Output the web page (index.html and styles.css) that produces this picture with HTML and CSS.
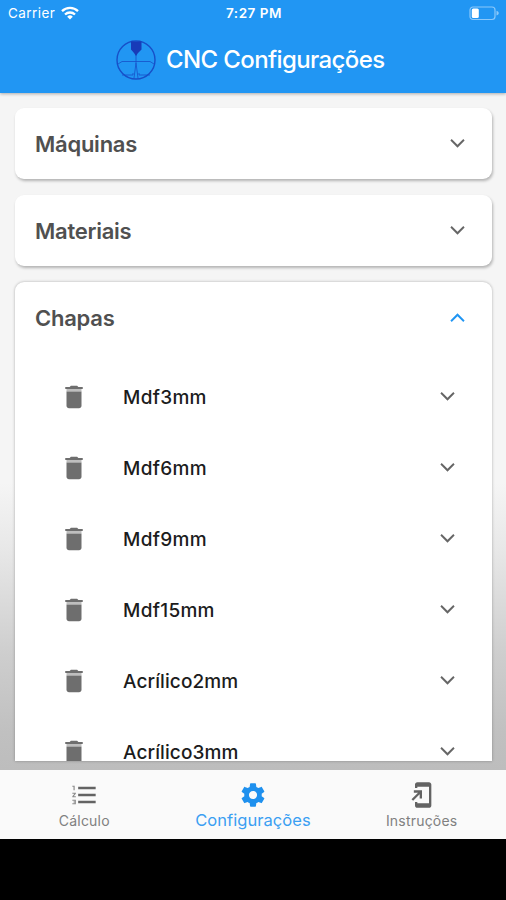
FILE: index.html
```html
<!DOCTYPE html>
<html lang="pt">
<head>
<meta charset="utf-8">
<title>CNC Configurações</title>
<link rel="stylesheet" href="styles.css">
</head>
<body>
<svg class="defs" width="0" height="0">
  <symbol id="chevron" viewBox="0 0 24 24"><path d="M16.800 8.300L12 13.100 7.200 8.300 6.100 9.500l5.900 6 5.900-6z"/></symbol>
  <symbol id="trash" viewBox="0 0 24 24"><path d="M6 19c0 1.100.9 2 2 2h8c1.100 0 2-.9 2-2V7.500H6z"/><path opacity=".45" d="M6 5.500h12v2H6z"/><path d="M19 4h-3.500l-1-1h-5l-1 1H5v1.600h14z"/></symbol>
</svg>
<header class="header">
  <div class="status">
    <div class="carrier"><span class="carrier-name">Carrier</span>
      <svg class="wifi" viewBox="0 0 18 14"><g fill="none" stroke="#fff" stroke-width="2.300"><path d="M1 5.200a11.500 11.500 0 0 1 16 0"/><path d="M4 8.500a7.300 7.300 0 0 1 10 0"/></g><path fill="#fff" d="M6.200 10.700a4 4 0 0 1 5.600 0L9 13.500z"/></svg>
    </div>
    <span class="time">7:27 PM</span>
    <svg class="battery" viewBox="0 0 31 15"><rect x="1" y="1" width="25" height="12.500" rx="3" fill="none" stroke="#8bc8fa" stroke-width="1.200"/><path d="M27.500 4.800c3 1.200 3 3.600 0 4.800z" fill="#8bc8fa"/><rect x="2.800" y="2.500" width="7" height="9.500" rx="1.500" fill="#fff"/></svg>
  </div>
  <div class="brand">
    <svg class="logo" viewBox="0 0 42 42"><g fill="none" stroke="#174fc8"><circle cx="21" cy="21" r="19" stroke-width="1.400"/><path d="M3 25l4-2.500h28l4 2.500M21 15v9l-2 15M21 24l2 15M7 36h11v-2M35 36H24v-2" stroke-width=".8"/></g><path fill="#183bb8" d="M16 2.500h10.500v8L23 14l-2 3-2-3-3-3.500z"/></svg>
    <h1 class="title">CNC Configurações</h1>
  </div>
</header>
<main class="content">
  <section class="card"><h2 class="card-head"><span>Máquinas</span><svg class="chev"><use href="#chevron"/></svg></h2></section>
  <section class="card"><h2 class="card-head"><span>Materiais</span><svg class="chev"><use href="#chevron"/></svg></h2></section>
  <section class="card open">
    <h2 class="card-head"><span>Chapas</span><svg class="chev up"><use href="#chevron"/></svg></h2>
    <ul class="list">
      <li class="row"><svg class="trash"><use href="#trash"/></svg><span class="name">Mdf3mm</span><svg class="chev"><use href="#chevron"/></svg></li>
      <li class="row"><svg class="trash"><use href="#trash"/></svg><span class="name">Mdf6mm</span><svg class="chev"><use href="#chevron"/></svg></li>
      <li class="row"><svg class="trash"><use href="#trash"/></svg><span class="name">Mdf9mm</span><svg class="chev"><use href="#chevron"/></svg></li>
      <li class="row"><svg class="trash"><use href="#trash"/></svg><span class="name">Mdf15mm</span><svg class="chev"><use href="#chevron"/></svg></li>
      <li class="row"><svg class="trash"><use href="#trash"/></svg><span class="name long">Acrílico2mm</span><svg class="chev"><use href="#chevron"/></svg></li>
      <li class="row"><svg class="trash"><use href="#trash"/></svg><span class="name long">Acrílico3mm</span><svg class="chev"><use href="#chevron"/></svg></li>
    </ul>
  </section>
</main>
<nav class="tabs">
  <a class="tab"><svg class="tab-icon" viewBox="0 0 24 24"><path opacity=".75" d="M2 17h2v.5H3v1h1v.5H2v1h3v-4H2v1zm1-9h1V4H2v1h1v3zm-1 3h1.800L2 13.100v.9h3v-1H3.200L5 10.900V10H2v1z"/><path d="M7 5v2h15V5zm0 14h15v-2H7zm0-6h15v-2H7z"/></svg><span>Cálculo</span></a>
  <a class="tab active"><svg class="tab-icon" viewBox="0 0 24 24"><path d="M19.430 12.980c.04-.32.07-.64.07-.98s-.03-.66-.07-.98l2.110-1.650c.19-.15.24-.42.12-.64l-2-3.460c-.12-.22-.39-.3-.61-.22l-2.490 1c-.52-.4-1.080-.73-1.690-.98l-.38-2.650C14.460 2.180 14.250 2 14 2h-4c-.25 0-.46.18-.49.42l-.38 2.650c-.61.25-1.170.59-1.690.98l-2.490-1c-.23-.09-.49 0-.61.22l-2 3.460c-.13.22-.07.49.12.64l2.110 1.650c-.04.32-.07.65-.07.98s.03.66.07.98l-2.110 1.650c-.19.15-.24.42-.12.64l2 3.460c.12.22.39.3.61.22l2.490-1c.52.4 1.080.73 1.690.98l.38 2.650c.03.24.24.42.49.42h4c.25 0 .46-.18.49-.42l.38-2.650c.61-.25 1.170-.59 1.690-.98l2.490 1c.23.09.49 0 .61-.22l2-3.460c.12-.22.07-.49-.12-.64l-2.110-1.650zM12 15.500c-1.930 0-3.500-1.570-3.500-3.500s1.570-3.500 3.500-3.500 3.500 1.570 3.500 3.500-1.570 3.500-3.500 3.500z"/></svg><span>Configurações</span></a>
  <a class="tab"><svg class="tab-icon" viewBox="0 0 24 24"><path d="M18 1.010L8 1c-1.100 0-2 .9-2 2v3h2V5h10v14H8v-1H6v3c0 1.100.9 2 2 2h10c1.100 0 2-.9 2-2V3c0-1.100-.9-1.990-2-1.990zM10 15h2V8H5v2h3.590L3 15.590 4.410 17 10 11.410z"/></svg><span>Instruções</span></a>
</nav>
</body>
</html>
```

FILE: styles.css
```css
* { box-sizing: border-box; }
body { margin: 0; width: 506px; height: 900px; background: #000; font-family: Inter, "Liberation Sans", sans-serif; overflow: hidden; display: flex; flex-direction: column; }
.defs { position: absolute; }
h1, h2, ul { margin: 0; padding: 0; list-style: none; }
.header { height: 93px; background: #2196f3; color: #fff; position: relative; z-index: 1; box-shadow: 0 1px 3px rgba(0,0,0,.3); flex: none; }
.status { height: 26px; padding: 0 6px 0 8px; display: grid; grid-template-columns: 1fr auto 1fr; align-items: center; font-size: 13px; }
.carrier { display: flex; align-items: center; gap: 6px; }
.carrier-name { font-size: 13.5px; letter-spacing: .45px; }
.wifi { width: 18px; height: 14px; }
.time { font-size: 13.5px; font-weight: 600; letter-spacing: .5px; }
.battery { width: 31px; height: 15px; justify-self: end; }
.brand { display: flex; align-items: center; padding-left: 115px; height: 67px; gap: 9px; }
.logo { width: 42px; height: 42px; }
.title { font-size: 24px; font-weight: 500; line-height: 30px; white-space: nowrap; letter-spacing: -.62px; }
.content { height: 677px; flex: none; padding: 15px 14px 9px 15px; overflow: hidden; display: flex; flex-direction: column; gap: 16px; background: linear-gradient(#f5f5f5 0, #f5f5f5 390px, #e8e8e8 455px, #cecece 560px, #c0c0c0 640px, #bdbdbd); }
.card { flex: none; height: 71px; background: #fff; border-radius: 9px; box-shadow: 1px 2px 3px rgba(0,0,0,.27); }
.card.open { flex: 1; min-height: 0; overflow: hidden; border-radius: 9px 9px 0 0; box-shadow: 0 0 3px rgba(0,0,0,.3); }
.card-head { height: 71px; padding: 0 20px; display: flex; align-items: center; justify-content: space-between; font-size: 22px; font-weight: 600; letter-spacing: -.25px; color: #505050; }
.chev { width: 29px; height: 29px; fill: #666; }
.up { fill: #2196f3; transform: rotate(180deg); }
.row { height: 71px; display: flex; align-items: center; padding: 0 30px 0 44px; }
.list { padding-top: 8px; }
.trash { width: 30px; height: 30px; fill: #6e6e6e; }
.name { flex: 1; margin-left: 34px; padding-top: 1px; font-size: 19px; font-weight: 500; letter-spacing: .3px; color: #1c1c1c; }
.name.long { letter-spacing: .1px; }
.tabs { height: 69px; flex: none; display: grid; grid-template-columns: repeat(3, 1fr); background: #fafafa; }
.tab { display: flex; flex-direction: column; align-items: center; padding-top: 11px; color: #808080; fill: #636363; font-size: 14px; line-height: 20px; letter-spacing: .2px; }
.tab-icon { width: 28px; height: 28px; margin-bottom: 2px; }
.active { color: #3a9ff2; fill: #1e90ee; font-size: 16.5px; line-height: 18px; letter-spacing: .05px; }
```
